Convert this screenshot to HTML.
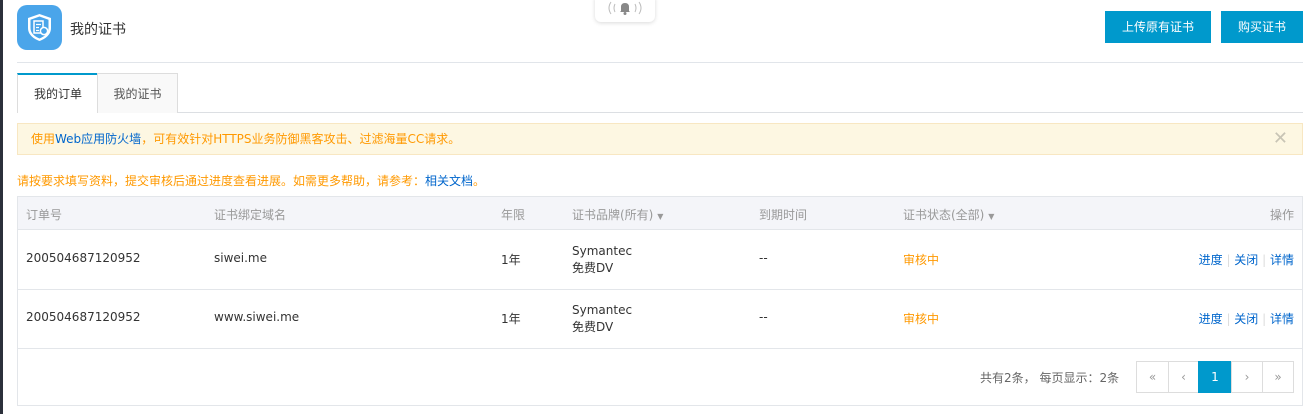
<!DOCTYPE html>
<html><head><meta charset="utf-8"><style>
*{margin:0;padding:0;box-sizing:border-box}
body{width:1310px;height:414px;background:#fff;font-family:"DejaVu Sans","Liberation Sans","Noto Sans CJK SC",sans-serif;font-size:12px;color:#333;position:relative;overflow:hidden}
.abs{position:absolute}
.lb{left:0;top:0;width:3px;height:414px;background:#2b303b}
.btn{background:#0099cc;color:#fff;font-size:12px;text-align:center;line-height:32px;height:32px;top:11px}
.th{color:#999}
.blue{color:#0066cc}
.or{color:#ff9900}
.pg{top:361px;height:32px;border:1px solid #ddd;text-align:center;line-height:30px;color:#999;background:#fff}
</style></head><body>
<div class="abs lb"></div>
<div class="abs" style="left:595px;top:-6px;width:60px;height:28px;border-radius:6px;box-shadow:0 1px 4px rgba(0,0,0,.15);background:#fff"></div>
<svg class="abs" style="left:605px;top:0" width="40" height="16" viewBox="0 0 40 16">
<path d="M6 2 Q2 8 6 14 M10 4 Q8 8 10 12 M34 2 Q38 8 34 14 M30 4 Q32 8 30 12" stroke="#bbb" stroke-width="1" fill="none"/>
<path d="M15 12 L16 11 V7 Q16 3 20 3 Q24 3 24 7 V11 L25 12 Z" fill="#888"/>
<circle cx="20" cy="13.5" r="1.5" fill="#888"/>
</svg>
<svg class="abs" style="left:17px;top:5px" width="45" height="45" viewBox="0 0 45 45">
<rect width="45" height="45" rx="10" fill="#4aa5ea"/>
<path d="M22.5 9 L34 13 V23 C34 30 28 34 22.5 36 C17 34 11 30 11 23 V13 Z" fill="#fff"/>
<path d="M22.5 11.5 L31.5 14.7 V23 C31.5 28.5 27 31.8 22.5 33.5 C18 31.8 13.5 28.5 13.5 23 V14.7 Z" fill="#4aa5ea"/>
<rect x="17" y="16" width="9" height="12" fill="none" stroke="#fff" stroke-width="1.5"/>
<path d="M19 19.5h5M19 22.5h3M19 25.5h3" stroke="#fff" stroke-width="1.3"/>
<circle cx="27" cy="26" r="3.6" fill="#4aa5ea" stroke="#fff" stroke-width="1.5"/>
</svg>
<div class="abs" style="left:70px;top:19px;font-size:14px;color:#333">我的证书</div>
<div class="abs btn" style="left:1105px;width:106px">上传原有证书</div>
<div class="abs btn" style="left:1221px;width:82px">购买证书</div>
<div class="abs" style="left:17px;top:62px;width:1286px;height:1px;background:#e1e5ea"></div>
<div class="abs" style="left:17px;top:112px;width:1286px;height:1px;background:#dcdfe3"></div>
<div class="abs" style="left:17px;top:73px;width:81px;height:40px;background:#fff;border-top:2px solid #0099cc;border-left:1px solid #ddd;text-align:center;line-height:38px">我的订单</div>
<div class="abs" style="left:97px;top:73px;width:81px;height:40px;background:#f9f9f9;border:1px solid #ddd;border-bottom:none;text-align:center;line-height:40px;color:#555">我的证书</div>
<div class="abs" style="left:17px;top:123px;width:1286px;height:32px;background:#fdf7e2;border:1px solid #f8e7c2;line-height:30px;padding-left:13px;color:#ff9900">使用<span class="blue">Web应用防火墙</span>，可有效针对HTTPS业务防御黑客攻击、过滤海量CC请求。<span class="abs" style="right:14px;top:0;color:#c8c4b5;font-size:18px">✕</span></div>
<div class="abs or" style="left:17px;top:172px">请按要求填写资料，提交审核后通过进度查看进展。如需更多帮助，请参考：<span class="blue">相关文档</span>。</div>
<div class="abs" style="left:17px;top:196px;width:1286px;height:210px;border:1px solid #e3e6ea"></div>
<div class="abs" style="left:18px;top:197px;width:1284px;height:33px;background:#f4f5f9;border-bottom:1px solid #e3e6ea"></div>
<div class="abs" style="left:18px;top:289px;width:1284px;height:1px;background:#e3e6ea"></div>
<div class="abs" style="left:18px;top:348px;width:1284px;height:1px;background:#e3e6ea"></div>
<div class="abs th" style="left:26px;top:206px">订单号</div>
<div class="abs th" style="left:214px;top:206px">证书绑定域名</div>
<div class="abs th" style="left:501px;top:206px">年限</div>
<div class="abs th" style="left:572px;top:206px">证书品牌(所有) <span style="font-size:8px">▼</span></div>
<div class="abs th" style="left:759px;top:206px">到期时间</div>
<div class="abs th" style="left:903px;top:206px">证书状态(全部) <span style="font-size:8px">▼</span></div>
<div class="abs th" style="right:16px;top:206px">操作</div>

<div class="abs" style="left:26px;top:251px">200504687120952</div>
<div class="abs" style="left:214px;top:251px">siwei.me</div>
<div class="abs" style="left:501px;top:251px">1年</div>
<div class="abs" style="left:572px;top:243px;line-height:17px">Symantec<br>免费DV</div>
<div class="abs" style="left:759px;top:251px">--</div>
<div class="abs or" style="left:903px;top:251px">审核中</div>
<div class="abs blue" style="right:16px;top:251px">进度 <span style="color:#ddd">|</span> 关闭 <span style="color:#ddd">|</span> 详情</div>

<div class="abs" style="left:26px;top:310px">200504687120952</div>
<div class="abs" style="left:214px;top:310px">www.siwei.me</div>
<div class="abs" style="left:501px;top:310px">1年</div>
<div class="abs" style="left:572px;top:302px;line-height:17px">Symantec<br>免费DV</div>
<div class="abs" style="left:759px;top:310px">--</div>
<div class="abs or" style="left:903px;top:310px">审核中</div>
<div class="abs blue" style="right:16px;top:310px">进度 <span style="color:#ddd">|</span> 关闭 <span style="color:#ddd">|</span> 详情</div>

<div class="abs" style="left:980px;top:369px;color:#666">共有2条， 每页显示：2条</div>
<div class="abs pg" style="left:1136px;width:33px">«</div>
<div class="abs pg" style="left:1168px;width:31px">‹</div>
<div class="abs pg" style="left:1198px;width:34px;background:#0099cc;border-color:#0099cc;color:#fff">1</div>
<div class="abs pg" style="left:1231px;width:32px">›</div>
<div class="abs pg" style="left:1262px;width:32px">»</div>
</body></html>
